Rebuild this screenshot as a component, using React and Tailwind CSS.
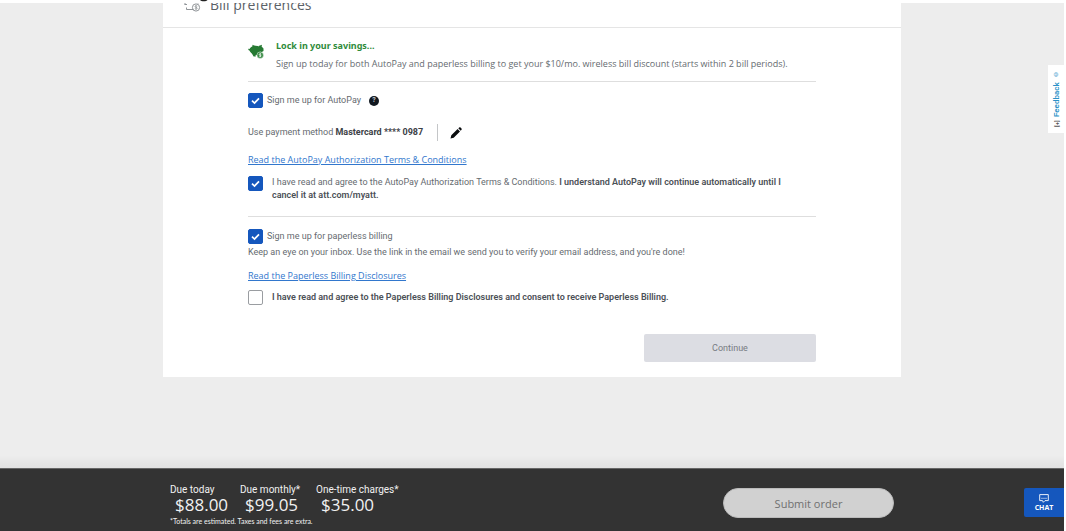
import React from "react";

function Check({ id, defaultChecked }) {
  return (
    <span className="grid size-[15px] shrink-0">
      <input
        id={id}
        type="checkbox"
        defaultChecked={defaultChecked}
        className="peer col-start-1 row-start-1 size-[15px] appearance-none rounded-[2px] border border-[#9a9da1] bg-white checked:border-[#1557bd] checked:bg-[#1557bd]"
      />
      <svg
        viewBox="0 0 15 15"
        className="pointer-events-none col-start-1 row-start-1 hidden size-[15px] peer-checked:block"
        fill="none"
        stroke="white"
        strokeWidth="1.7"
        aria-hidden="true"
      >
        <path d="M4 7.6 6.5 10 11 5.3" />
      </svg>
    </span>
  );
}

function BillIcon() {
  return (
    <svg viewBox="0 0 18 16" className="h-4 w-[18px]" fill="none" stroke="#85898d" strokeWidth="0.9" aria-hidden="true">
      <path d="M1 8.500V3.500h13v4M.5 8.500H3M2.500 13.500h7M2.500 11.500v2" />
      <circle cx="12" cy="11.500" r="3.600" />
      <path d="M13.300 10.200c-1.200-.8-2.500-.4-2.300.5.2.9 2.200.5 2.300 1.500.1.9-1.500 1.100-2.500.4M12 9.300v4.500" strokeWidth="0.7" />
    </svg>
  );
}

function PiggyIcon() {
  return (
    <svg viewBox="0 0 16 15" className="h-[15px] w-4 shrink-0" aria-hidden="true">
      <g fill="#267a33">
        <ellipse cx="7.500" cy="6" rx="6" ry="4.200" />
        <path d="M10.500 2 14 .8l-.4 1.700L15.500 4.600V7l-2.500 1.500ZM4.600 3.200 4.400.7 8 2.200ZM.2 4.800l2 .2-.5 1.700C.8 6.500.2 5.800.2 4.800ZM3.300 8.500h3.200l1 2 .3 2H5.600ZM7 8h3.500L8.800 11H7.500Z" />
      </g>
      <circle cx="12.200" cy="11.200" r="3.300" fill="#3b8c47" stroke="white" strokeWidth="0.5" />
      <path d="M13.200 10.100c-1.100-.6-2.100-.2-1.900.5.2.7 1.800.5 1.800 1.200 0 .7-1.200.8-2 .2M12.200 9.200v4" fill="none" stroke="white" strokeWidth="0.7" />
    </svg>
  );
}

function Total({ label, value }) {
  return (
    <div>
      <dt className="text-[10px] leading-[14px]">{label}</dt>
      <dd className="pl-[5px] font-['Open_Sans',sans-serif] text-[17px] leading-4">{value}</dd>
    </div>
  );
}

export default function App() {
  return (
    <div className="flex min-h-screen flex-col bg-white pr-[2px] font-['Roboto','Noto_Sans',sans-serif] text-[9px] leading-[13px] text-[#666b70]">
      <header className="h-[3px] shrink-0 pl-[200px]">
        <svg viewBox="0 0 8 2" className="h-[2px] w-2" aria-hidden="true">
          <path d="M0 0c1 1.800 6.500 1.800 7.500 0Z" fill="#222" />
        </svg>
      </header>

      <main className="relative flex-1 bg-[#ededed] px-4">
        <section className="mx-auto max-w-[738px] bg-white">
          <div className="flex h-[25px] items-start gap-2 overflow-hidden border-b border-[#e5e5e5] pl-[21px]">
            <span className="-mt-[7px]">
              <BillIcon />
            </span>
            <h1 className="-mt-2 font-['Open_Sans',sans-serif] text-[14px] leading-5 text-[#5b6167]">Bill preferences</h1>
          </div>

          <div className="px-[85px] pt-[9px] pb-[15px]">
            <div className="flex gap-[10px] border-b border-[#dedede] pb-2">
              <span className="pt-[7px]">
                <PiggyIcon />
              </span>
              <div className="pl-[2px] font-['Open_Sans','Noto_Sans',sans-serif] leading-[18px]">
                <h2 className="font-['Noto_Sans',sans-serif] font-bold text-[#2f8b3a]">Lock in your savings...</h2>
                <p className="font-medium">
                  Sign up today for both AutoPay and paperless billing to get your $10/mo. wireless bill discount (starts within 2 bill periods).
                </p>
              </div>
            </div>

            <div className="flex items-center pt-[11px]">
              <Check id="autopay" defaultChecked />
              <label htmlFor="autopay" className="pl-1">Sign me up for AutoPay</label>
              <button type="button" aria-label="About AutoPay" className="ml-2 flex size-[10px] items-center justify-center rounded-full bg-[#111820] text-[7px] font-bold text-[#c8ccd0]">
                ?
              </button>
            </div>

            <div className="flex items-center pt-4">
              <p>
                Use payment method <b className="font-bold text-[#3c4146]">Mastercard **** 0987</b>
              </p>
              <span className="ml-[14px] h-[17px] border-l border-[#c4c6c8]" />
              <button type="button" aria-label="Edit payment method" className="ml-3">
                <svg viewBox="0 0 12 12" className="size-3" aria-hidden="true">
                  <path d="M.5 11.500 1.300 8.200 7.600 2 10 4.400 3.700 10.700ZM8.300 1.300 9.200.5c.5-.4.9-.4 1.300 0l1 1c.4.4.4.9 0 1.300l-.8.900Z" fill="#0b0d0f" />
                </svg>
              </button>
            </div>

            <p className="pt-3 font-['Open_Sans',sans-serif] font-medium">
              <a href="#autopay-terms" className="text-[#3277cd] underline">Read the AutoPay Authorization Terms &amp; Conditions</a>
            </p>

            <div className="flex gap-[9px] border-b border-[#dedede] pt-[10px] pb-[14px]">
              <Check id="autopay-agree" defaultChecked />
              <label htmlFor="autopay-agree" className="pr-4">
                I have read and agree to the AutoPay Authorization Terms &amp; Conditions.{" "}
                <b className="font-semibold text-[#4b5056]">I understand AutoPay will continue automatically until I cancel it at att.com/myatt.</b>
              </label>
            </div>

            <div className="flex items-center pt-3">
              <Check id="paperless" defaultChecked />
              <label htmlFor="paperless" className="pl-1">Sign me up for paperless billing</label>
            </div>
            <p className="pt-[2px]">
              Keep an eye on your inbox. Use the link in the email we send you to verify your email address, and you're done!
            </p>
            <p className="pt-[10px] font-['Open_Sans',sans-serif] font-medium">
              <a href="#paperless-disclosures" className="text-[#3277cd] underline">Read the Paperless Billing Disclosures</a>
            </p>
            <div className="flex items-center gap-[9px] pt-2">
              <Check id="paperless-agree" />
              <label htmlFor="paperless-agree" className="font-semibold text-[#4b5056]">
                I have read and agree to the Paperless Billing Disclosures and consent to receive Paperless Billing.
              </label>
            </div>

            <div className="flex justify-end pt-[29px]">
              <button type="button" className="h-7 w-[172px] rounded-[2px] bg-[#dcdde3] text-[#777b82]">Continue</button>
            </div>
          </div>
        </section>

        <a
          href="#feedback"
          className="absolute top-[62px] right-0 flex h-[68px] w-4 rotate-180 items-center justify-center gap-1 bg-white text-[8px] font-semibold text-[#2a91c7] [writing-mode:vertical-rl]"
        >
          <span className="text-[6px] text-[#555]">[+]</span>
          <span>Feedback</span>
          <span className="text-[6px]">©</span>
        </a>
      </main>

      <div className="relative -mt-[13px] h-[13px] bg-linear-to-b from-transparent to-black/5" />
      <footer className="flex h-[63px] items-start border-t border-[#666] bg-[#333] pt-[14px] text-[#f1f1f1]">
        <div className="mx-auto flex w-[724px] items-start justify-between">
          <div>
            <dl className="flex">
              <div className="w-[70px]"><Total label="Due today" value="$88.00" /></div>
              <div className="w-[76px]"><Total label="Due monthly*" value="$99.05" /></div>
              <Total label="One-time charges*" value="$35.00" />
            </dl>
            <p className="pt-[3px] font-['Lato',sans-serif] text-[7px] leading-[10px]">*Totals are estimated. Taxes and fees are extra.</p>
          </div>
          <button type="button" className="mt-[5px] h-[30px] w-[171px] rounded-full border border-[#bbb] bg-[#d1d1d1] font-['Open_Sans',sans-serif] text-[11px] text-[#707070]">
            Submit order
          </button>
        </div>
        <button
          type="button"
          className="absolute right-[2px] bottom-[14px] flex h-[29px] w-10 flex-col items-center justify-center rounded-l-[2px] bg-[#1557bd] font-['Open_Sans',sans-serif] text-[7px] leading-[9px] font-bold text-white"
        >
          <svg viewBox="0 0 10 9" className="h-[9px] w-[10px]" fill="none" stroke="white" strokeWidth="0.9" aria-hidden="true">
            <path d="M.7.6h8.600v6H6L4.300 8.300 3.500 6.600H.7Z" />
            <path d="M2.400 4.300h5.200" strokeDasharray="1.200 .8" />
          </svg>
          CHAT
        </button>
      </footer>
    </div>
  );
}
